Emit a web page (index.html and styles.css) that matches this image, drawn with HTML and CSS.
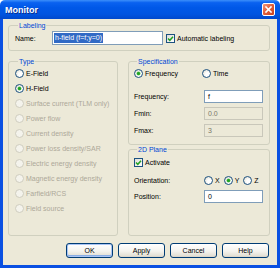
FILE: index.html
```html
<!DOCTYPE html>
<html>
<head>
<meta charset="utf-8">
<link rel="stylesheet" href="styles.css">
</head>
<body>
<div class="window">
  <div class="titlebar">
    <span class="title">Monitor</span>
    <span class="close"><svg width="11" height="11" viewBox="0 0 11 11"><path d="M3 3 L8 8 M8 3 L3 8" stroke="#fff" stroke-width="1.6" stroke-linecap="square"/></svg></span>
  </div>
  <div class="client">
    <fieldset class="group labeling">
      <legend>Labeling</legend>
      <div class="name-row">
        <span class="name-lbl">Name:</span>
        <span class="input name-input"><span class="sel">h-field (f=f;y=0)</span></span>
        <span class="check"><svg width="7" height="7" viewBox="0 0 7 7"><path d="M1 3.5 L2.8 5.3 L6 1.8" fill="none" stroke="#21A121" stroke-width="1.5"/></svg></span>
        <span class="check-lbl">Automatic labeling</span>
      </div>
    </fieldset>
    <div class="cols">
      <fieldset class="group type">
        <legend>Type</legend>
        <div class="opt"><span class="radio"></span>E-Field</div>
        <div class="opt"><span class="radio on"></span>H-Field</div>
        <div class="opt off"><span class="radio"></span>Surface current (TLM only)</div>
        <div class="opt off"><span class="radio"></span>Power flow</div>
        <div class="opt off"><span class="radio"></span>Current density</div>
        <div class="opt off"><span class="radio"></span>Power loss density/SAR</div>
        <div class="opt off"><span class="radio"></span>Electric energy density</div>
        <div class="opt off"><span class="radio"></span>Magnetic energy density</div>
        <div class="opt off"><span class="radio"></span>Farfield/RCS</div>
        <div class="opt off"><span class="radio"></span>Field source</div>
      </fieldset>
      <div class="rightcol">
        <fieldset class="group spec">
          <legend>Specification</legend>
          <div class="spec-radios">
            <div class="opt freq"><span class="radio on"></span>Frequency</div>
            <div class="opt"><span class="radio"></span>Time</div>
          </div>
          <div class="field-grid">
            <span>Frequency:</span><span class="input">f</span>
            <span>Fmin:</span><span class="input dis">0.0</span>
            <span>Fmax:</span><span class="input dis">3</span>
          </div>
        </fieldset>
        <fieldset class="group plane">
          <legend>2D Plane</legend>
          <div class="activate"><span class="check"><svg width="7" height="7" viewBox="0 0 7 7"><path d="M1 3.5 L2.8 5.3 L6 1.8" fill="none" stroke="#21A121" stroke-width="1.5"/></svg></span>Activate</div>
          <div class="field-grid plane-grid">
            <span>Orientation:</span>
            <span class="axes">
              <span class="opt axis"><span class="radio"></span>X</span>
              <span class="opt axis"><span class="radio on"></span>Y</span>
              <span class="opt axis"><span class="radio"></span>Z</span>
            </span>
            <span>Position:</span><span class="input pos">0</span>
          </div>
        </fieldset>
      </div>
    </div>
    <div class="buttons">
      <span class="btn default">OK</span>
      <span class="btn">Apply</span>
      <span class="btn">Cancel</span>
      <span class="btn">Help</span>
    </div>
  </div>
</div>
</body>
</html>
```
FILE: styles.css
```css
* { box-sizing: border-box; }
html, body { margin: 0; padding: 0; }
body {
  width: 280px; height: 268px; overflow: hidden;
  font-family: "Liberation Sans", Arial, sans-serif;
  font-size: 7px; color: #000; background: #fff;
}
.window { width: 280px; height: 268px; display: flex; flex-direction: column; }
.titlebar {
  height: 19px; flex: none;
  display: flex; align-items: center; justify-content: space-between;
  padding: 0 5px 0 5px;
  background: linear-gradient(#3C8FFA 0%, #0A62F0 14%, #0058E8 40%, #0054E0 75%, #0048CC 100%);
  border-radius: 5px 5px 0 0;
}
.title {
  color: #fff; font-weight: bold; font-size: 9px;
  text-shadow: 1px 1px 0 #0B2F8E;
}
.close {
  width: 13px; height: 13px; display: flex; align-items: center; justify-content: center;
  border: 1px solid #fff; border-radius: 2px;
  background: linear-gradient(135deg, #F19A7D 0%, #E2603D 45%, #C8401C 100%);
}
.client {
  flex: 1;
  background: #ECE9D8;
  border: 3px solid #0A50E2; border-top: none;
  padding: 2px 7px 0 5px;
  display: flex; flex-direction: column;
}
.group {
  margin: 0; border: 1px solid #D0D0BF; border-radius: 3px;
  min-width: 0;
}
.group legend {
  color: #0046D5; line-height: 9px; padding: 0 1px; margin-left: 3px;
}
.labeling { height: 30px; padding: 1px 5px 0 6px; }
.name-row { display: flex; align-items: center; height: 14px; }
.name-lbl { width: 37px; }
.input {
  background: #fff; border: 1px solid #7F9DB9;
  height: 13px; display: flex; align-items: center; padding: 0 3px;
}
.name-input { width: 111px; height: 14px; padding: 0 1px; }
.sel { background: #316AC5; color: #fff; line-height: 10px; padding: 0 1px; }
.check {
  width: 9px; height: 9px; flex: none; margin-left: 3px; margin-right: 2px;
  border: 1px solid #1C5180;
  background: linear-gradient(135deg, #DCDCD7, #FFFFFF);
  display: flex; align-items: center; justify-content: center;
}
.cols { display: flex; gap: 10px; margin-top: 6px; height: 179px; }
.type { width: 110px; height: 179px; padding: 0 2px 0 6px; }
.opt { display: flex; align-items: center; height: 15px; white-space: nowrap; }
.radio {
  width: 9px; height: 9px; flex: none; border-radius: 50%;
  border: 1px solid #1C5180; margin-right: 2px;
  background: radial-gradient(circle at 65% 65%, #FFFFFF 30%, #DCD9CB 100%);
  display: flex; align-items: center; justify-content: center;
}
.radio.on::after {
  content: ""; width: 3px; height: 3px; border-radius: 50%;
  background: #21A121; box-shadow: 0 0 0 0.5px #5CC75C;
}
.opt.off { color: #ACA899; }
.opt.off .radio { border-color: #CFCDBF; background: #F4F3EC; }
.rightcol { width: 142px; display: flex; flex-direction: column; }
.spec { height: 88px; flex: none; padding: 0 6px 0 5px; }
.spec-radios { display: flex; }
.freq { width: 68px; }
.field-grid {
  display: grid; grid-template-columns: 70px 59px;
  grid-auto-rows: 13px; row-gap: 4px; align-items: center;
  margin-top: 9px;
}
.input.dis { background: #ECE9D8; border-color: #C9C7BA; color: #7A7868; }
.plane { flex: 1; padding: 0 6px 0 5px; }
.activate { display: flex; align-items: center; height: 14px; margin-top: 1px; }
.activate .check { margin-left: 0; margin-right: 2px; }
.plane-grid { margin-top: 5px; row-gap: 3px; }
.axes { display: flex; }
.axis { width: 22px; height: 13px; }
.buttons {
  display: flex; justify-content: flex-end; gap: 5px;
  margin-top: 7px; padding-right: 1px;
}
.btn {
  width: 47px; height: 15px; display: flex; align-items: center; justify-content: center;
  border: 1px solid #003C74; border-radius: 3px;
  background: linear-gradient(#FFFFFF 0%, #F4F3EE 55%, #E3E0D5 90%, #D6D0C5 100%);
}
.btn.default { box-shadow: inset 0 0 0 1px #A9C4F4, inset 0 -1px 0 1px #89ADE4; }
```
